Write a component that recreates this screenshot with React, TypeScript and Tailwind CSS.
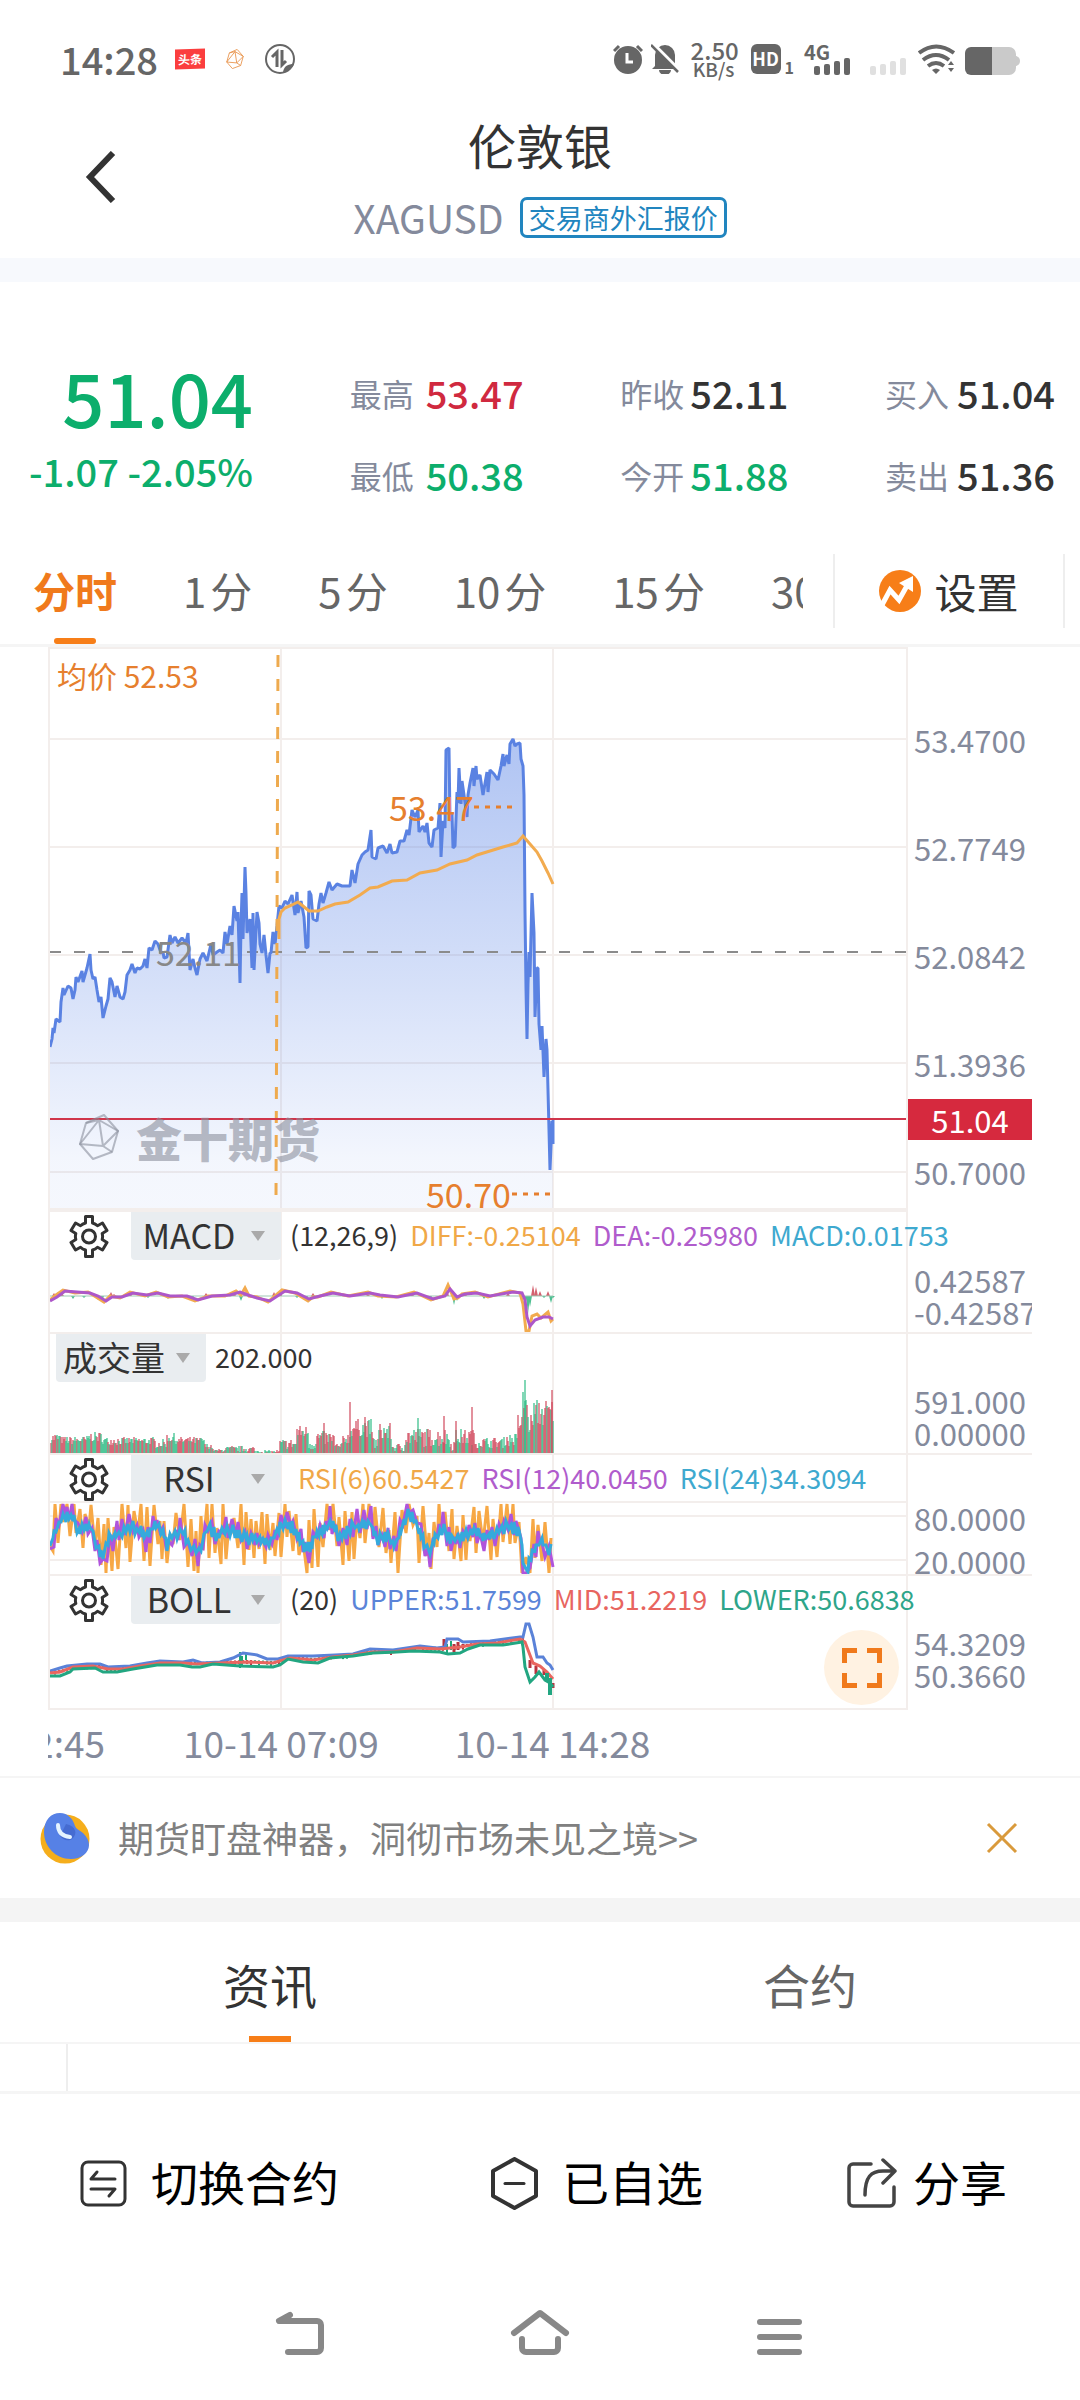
import type { ReactNode } from "react";

type Point = [number, number];

const stats = [
  {
    width: "w-[174px]",
    rows: [
      { label: "最高", value: "53.47", color: "text-[#d0293f]" },
      { label: "最低", value: "50.38", color: "text-[#0cae6c]" },
    ],
  },
  {
    width: "w-[168px]",
    rows: [
      { label: "昨收", value: "52.11", color: "text-[#333333]" },
      { label: "今开", value: "51.88", color: "text-[#0cae6c]" },
    ],
  },
  {
    width: "w-[170px]",
    rows: [
      { label: "买入", value: "51.04", color: "text-[#333333]" },
      { label: "卖出", value: "51.36", color: "text-[#333333]" },
    ],
  },
];

const minutePeriods = [1, 5, 10, 15, 30];

const price: Point[] = [
  [0, 398], [2, 390], [3, 379], [4, 384], [6, 370], [10, 373], [11, 353], [13, 339], [14, 346], [18, 337],
  [21, 339], [23, 350], [25, 341], [26, 328], [28, 333], [32, 322], [33, 333], [37, 319], [40, 305], [41, 321],
  [43, 330], [45, 328], [47, 341], [49, 353], [51, 348], [53, 369], [56, 357], [58, 350], [60, 329], [62, 333],
  [65, 348], [67, 337], [70, 348], [73, 350], [75, 343], [77, 326], [80, 321], [82, 315], [85, 324], [87, 319],
  [90, 320], [93, 317], [95, 310], [97, 319], [99, 299], [102, 301], [105, 292], [108, 295], [111, 304], [113, 303],
  [114, 309], [117, 308], [120, 286], [122, 294], [125, 288], [128, 294], [132, 289], [136, 294], [138, 284], [140, 321],
  [143, 310], [145, 319], [147, 326], [150, 310], [153, 304], [157, 312], [161, 295], [163, 306], [167, 303], [170, 301],
  [173, 304], [175, 283], [177, 295], [180, 277], [182, 286], [184, 257], [187, 272], [188, 263], [190, 334], [191, 277],
  [192, 244], [193, 290], [195, 218], [196, 244], [197, 284], [200, 270], [202, 319], [203, 264], [204, 321], [207, 263],
  [209, 274], [210, 295], [212, 304], [214, 286], [216, 306], [218, 324], [220, 304], [221, 304], [223, 283], [225, 295],
  [227, 277], [229, 257], [232, 259], [235, 252], [238, 255], [242, 246], [245, 266], [247, 243], [248, 264], [251, 252],
  [254, 268], [256, 299], [258, 298], [259, 242], [261, 246], [263, 270], [267, 272], [269, 255], [271, 244], [273, 254],
  [276, 244], [279, 233], [282, 241], [287, 235], [292, 237], [297, 237], [300, 237], [302, 221], [305, 234], [308, 215],
  [312, 206], [315, 203], [318, 201], [321, 181], [322, 208], [326, 210], [328, 199], [333, 197], [337, 204], [340, 195],
  [342, 204], [347, 203], [350, 192], [354, 192], [357, 181], [359, 186], [362, 161], [365, 168], [368, 161], [369, 183],
  [373, 177], [375, 183], [377, 174], [379, 194], [382, 198], [384, 181], [388, 179], [390, 154], [391, 208], [393, 172],
  [395, 179], [396, 101], [399, 99], [400, 172], [402, 164], [403, 199], [405, 197], [407, 143], [408, 154], [409, 119],
  [411, 155], [412, 132], [414, 146], [417, 168], [418, 146], [420, 134], [423, 119], [424, 137], [426, 117], [427, 130],
  [430, 126], [433, 146], [437, 123], [438, 143], [440, 121], [444, 125], [448, 131], [451, 117], [453, 105], [454, 117],
  [457, 106], [459, 115], [460, 95], [463, 90], [465, 97], [467, 95], [470, 94], [471, 110], [473, 117], [474, 146],
  [475, 263], [476, 339], [477, 390], [478, 335], [479, 303], [480, 328], [482, 244], [484, 284], [485, 368], [487, 319],
  [488, 319], [489, 375], [491, 401], [492, 377], [494, 428], [496, 390], [497, 401], [499, 481], [500, 521], [502, 472],
  [503, 495], [503, 470],
];

const average: Point[] = [
  [229, 290], [229, 270], [231, 263], [235, 259], [242, 256], [248, 253], [253, 257], [259, 262], [268, 262], [277, 258],
  [285, 255], [298, 253], [310, 246], [320, 239], [328, 238], [342, 232], [357, 231], [370, 224], [387, 221], [400, 215],
  [417, 211], [427, 206], [440, 202], [453, 198], [467, 194], [473, 187], [480, 195], [487, 203], [492, 212], [498, 224],
  [503, 235],
];

const dea: Point[] = [
  [0, 89], [7, 85], [15, 79], [27, 80], [40, 81], [48, 84], [56, 89], [62, 85], [72, 85], [83, 81], [97, 83], [108, 81],
  [120, 84], [137, 84], [148, 88], [162, 84], [180, 83], [190, 80], [198, 83], [207, 86], [220, 89], [235, 79], [247, 81],
  [259, 87], [270, 84], [283, 81], [300, 84], [320, 81], [330, 83], [348, 85], [367, 81], [383, 87], [395, 84], [400, 77],
  [407, 85], [415, 82], [427, 81], [440, 84], [463, 80], [472, 81], [475, 88], [477, 105], [480, 114], [485, 108],
  [493, 105], [499, 105], [503, 107],
];

const diff: Point[] = [
  [0, 88], [6, 83], [13, 78], [25, 81], [38, 80], [46, 85], [54, 90], [60, 84], [70, 86], [80, 80], [95, 84], [106, 80],
  [118, 85], [132, 84], [145, 89], [158, 84], [175, 84], [186, 79], [191, 83], [195, 76], [199, 84], [207, 85], [218, 90],
  [232, 78], [245, 81], [258, 89], [263, 85], [268, 85], [281, 80], [298, 84], [318, 80], [328, 84], [346, 85], [364, 80],
  [381, 88], [393, 84], [398, 73], [404, 87], [408, 86], [412, 82], [425, 80], [438, 85], [460, 79], [470, 81], [473, 92],
  [476, 119], [479, 119], [482, 104], [487, 102], [491, 106], [498, 100], [501, 109], [503, 107],
];

const macdBars: Point[] = [
  [4, 3], [8, 4], [12, 3], [23, -3], [34, -2], [48, -4], [52, -5], [61, 4], [64, 2], [80, 3], [98, -2], [118, -3],
  [142, -4], [156, 3], [184, 4], [191, -5], [195, 5], [206, -3], [224, 4], [230, 5], [247, -2], [256, -4], [263, 3],
  [276, 2], [318, 2], [332, -3], [362, 3], [380, -4], [397, 7], [404, -9], [407, -5], [415, 3], [434, -3], [458, 3],
  [476, -5], [478, -18], [480, -11], [483, 11], [486, 9], [490, 5], [494, -2], [498, 5], [501, -7], [503, -2],
];

const rsiBase: Point[] = [
  [0, 92], [5, 75], [13, 60], [22, 62], [30, 77], [40, 70], [45, 87], [53, 103], [60, 82], [73, 78], [83, 72], [90, 77],
  [97, 83], [105, 68], [112, 75], [117, 90], [123, 80], [133, 78], [140, 93], [150, 95], [157, 72], [167, 80], [177, 73],
  [190, 80], [207, 85], [220, 87], [233, 70], [243, 72], [257, 95], [267, 80], [280, 68], [290, 82], [303, 73], [320, 67],
  [327, 85], [337, 82], [345, 90], [357, 60], [367, 68], [378, 97], [387, 80], [393, 72], [402, 85], [423, 78], [440, 83],
  [457, 70], [470, 75], [473, 102], [476, 117], [482, 97], [490, 85], [497, 93], [503, 95],
];

const bollUpper: Point[] = [
  [0, 95], [10, 92], [17, 90], [37, 88], [50, 88], [58, 91], [80, 90], [97, 87], [110, 85], [133, 86], [143, 84],
  [152, 87], [170, 86], [183, 82], [193, 77], [207, 79], [217, 83], [228, 83], [238, 80], [263, 80], [285, 79],
  [303, 78], [320, 73], [343, 74], [370, 70], [387, 72], [395, 71], [397, 63], [408, 63], [413, 66], [440, 65],
  [470, 61], [473, 61], [476, 48], [479, 48], [483, 61], [487, 81], [493, 81], [497, 87], [500, 89], [503, 94],
];

const bollMid: Point[] = [
  [0, 97], [10, 96], [23, 91], [43, 90], [58, 93], [73, 93], [90, 90], [110, 87], [133, 87], [147, 88], [170, 87],
  [197, 86], [223, 87], [240, 82], [263, 84], [283, 81], [303, 79], [323, 76], [343, 76], [367, 72], [390, 73],
  [410, 71], [427, 68], [447, 67], [470, 63], [475, 66], [483, 87], [490, 90], [497, 96], [503, 103],
];

const bollLower: Point[] = [
  [0, 100], [10, 100], [20, 96], [23, 93], [45, 92], [53, 96], [67, 96], [83, 93], [107, 89], [130, 89], [142, 91],
  [150, 91], [163, 88], [190, 90], [223, 91], [230, 89], [238, 83], [253, 86], [268, 87], [280, 82], [303, 80],
  [323, 77], [347, 76], [363, 75], [390, 76], [398, 78], [410, 77], [418, 73], [430, 69], [453, 69], [472, 66],
  [473, 71], [475, 91], [480, 106], [485, 101], [489, 96], [495, 104], [500, 107], [503, 111],
];

// [from x, to x, lowest bar, tallest bar]
const volumeBands = [
  [0, 10, 10, 20], [10, 38, 9, 17], [38, 52, 11, 21], [52, 104, 8, 16], [104, 116, 5, 14], [116, 124, 10, 20],
  [124, 154, 9, 16], [154, 162, 4, 10], [162, 172, 1, 4], [172, 204, 1, 7], [204, 229, 0, 3], [229, 246, 4, 14],
  [246, 258, 14, 28], [258, 266, 3, 16], [266, 284, 8, 22], [284, 292, 2, 10], [292, 300, 9, 20], [300, 322, 16, 34],
  [322, 328, 3, 17], [328, 341, 12, 30], [341, 354, 1, 10], [354, 376, 6, 26], [376, 400, 6, 25], [400, 405, 2, 14],
  [405, 424, 8, 24], [424, 454, 5, 16], [454, 467, 7, 20], [467, 472, 20, 40], [472, 477, 38, 64], [477, 482, 18, 40],
  [482, 503, 26, 54],
];

const volumeSpikes: Point[] = [
  [273, 30], [299, 51], [314, 36], [367, 35], [393, 37], [405, 32], [421, 46], [474, 73], [501, 63],
];

function toPath(points: Point[]) {
  return points.map(([x, y], i) => `${i ? "L" : "M"}${x} ${y}`).join("");
}

function createRandom(seed: number) {
  let value = seed;
  return () => {
    value = (value * 16807) % 2147483647;
    return value / 2147483647;
  };
}

function valueAt(points: Point[], x: number) {
  const i = points.findIndex((p) => p[0] >= x);
  if (i <= 0) return points[i === 0 ? 0 : points.length - 1][1];
  const [x0, y0] = points[i - 1];
  const [x1, y1] = points[i];
  return y0 + ((y1 - y0) * (x - x0)) / (x1 - x0 || 1);
}

function oscillator(seed: number, step: number, swing: number, gain: number): Point[] {
  const random = createRandom(seed);
  const out: Point[] = [];
  let side = 1;
  for (let x = 0; x <= 503; x += step + Math.floor(random() * 3)) {
    side = -side;
    const base = 80 + (valueAt(rsiBase, x) - 80) * gain;
    const y = base + side * swing * (0.1 + random() * 0.9);
    out.push([x, Math.max(49, Math.min(118, Math.round(y)))]);
  }
  return out;
}

const rsi6 = oscillator(11, 2, 36, 1.2);
const rsi12 = oscillator(29, 2, 15, 1.3);
const rsi24 = oscillator(53, 1, 7, 1);

const volume = (() => {
  const random = createRandom(7);
  const bars: { x: number; height: number; up: boolean }[] = [];
  for (const [from, to, low, high] of volumeBands) {
    for (let x = from; x < to; x += 1) {
      bars.push({ x, height: Math.round(low + (high - low) * random()), up: random() > 0.5 });
    }
  }
  for (const [x, height] of volumeSpikes) bars.push({ x, height, up: x !== 474 && x !== 367 });
  return bars;
})();

const bollCandles = (() => {
  const random = createRandom(91);
  const bars: { x: number; y: number; height: number; up: boolean }[] = [];
  for (let x = 0; x < 473; x += 4) {
    bars.push({ x, y: valueAt(bollMid, x) - 2, height: 2 + Math.round(random() * 3), up: random() > 0.5 });
  }
  return bars;
})();

/* ---------- status bar ---------- */

function PolyhedronIcon({ className }: { className: string }) {
  return (
    <svg viewBox="0 0 40 46" fill="none" stroke="currentColor" strokeWidth="2" strokeLinejoin="round" className={className}>
      <path d="M7 9 25 1l14 16-6 21-19 7L1 30Z" />
      <path d="M20 6 1 30l23 2L39 17 20 6l4 26 9 6M7 9l13-3" />
    </svg>
  );
}

function StatusBar() {
  return (
    <div className="flex h-[118px] items-center justify-between pl-[60px] pr-[60px] text-[#666666]">
      <div className="flex items-center">
        <span className="text-[38px] font-medium leading-[40px]">14:28</span>
        <span className="ml-[17px] h-5 w-[30px] -skew-y-2 bg-[#fb3e3e] text-center text-[12px] font-bold leading-[19px] text-white">头条</span>
        <PolyhedronIcon className="ml-[21px] h-5 w-[18px] text-[#e8934a]" />
        <svg viewBox="0 0 30 30" className="ml-[21px] size-[30px]" fill="none">
          <circle cx="15" cy="15" r="14" stroke="currentColor" strokeWidth="2" />
          <path d="M12 23V8l-5 5M17 6v15l4-4" stroke="currentColor" strokeWidth="3" />
          <path d="M18 28c1-6 5-8 11-8-2 4-6 8-11 8Z" fill="currentColor" />
        </svg>
      </div>
      <div className="flex items-center">
        <svg viewBox="0 0 30 30" className="size-[30px]" fill="none" stroke="currentColor">
          <circle cx="15" cy="16" r="14" fill="currentColor" stroke="none" />
          <path d="m1 7 5-5M29 7l-5-5" strokeWidth="3" />
          <path d="M14 9v9h6" stroke="#fff" strokeWidth="3" />
        </svg>
        <svg viewBox="0 0 28 30" className="ml-2 h-[30px] w-7" fill="none">
          <path d="M4 22V11a10 10 0 0 1 20 0v11l3 3H1ZM8 26h12a6 5 0 0 1-12 0Z" fill="currentColor" />
          <path d="m1-1 27 27" stroke="#fff" strokeWidth="4" />
          <path d="m0 1 27 27" stroke="currentColor" strokeWidth="2.5" />
        </svg>
        <div className="ml-3 w-[46px] text-center font-medium">
          <div className="text-[24px] leading-5">2.50</div>
          <div className="text-[19px] leading-[18px]">KB/s</div>
        </div>
        <div className="ml-[14px] h-[30px] w-[30px] rounded-[6px] bg-[#666666] text-center text-[18px] font-bold leading-[29px] text-white">HD</div>
        <span className="ml-1 mt-4 text-[16px] font-bold leading-4">1</span>
        <div className="relative ml-[10px] h-[31px] w-[46px]">
          <span className="absolute left-0 top-0 text-[20px] font-bold leading-4">4G</span>
          <svg viewBox="0 0 36 17" className="absolute bottom-0 right-0 h-[17px] w-9" fill="currentColor">
            <rect x="0" y="8" width="6" height="9" rx="2" />
            <rect x="10" y="6" width="6" height="11" rx="2" />
            <rect x="20" y="3" width="6" height="14" rx="2" />
            <rect x="30" y="0" width="6" height="17" rx="2" />
          </svg>
        </div>
        <svg viewBox="0 0 36 17" className="ml-[20px] mt-[14px] h-[17px] w-9 text-[#e0e0e0]" fill="currentColor">
          <rect x="0" y="8" width="6" height="9" rx="2" />
          <rect x="10" y="6" width="6" height="11" rx="2" />
          <rect x="20" y="3" width="6" height="14" rx="2" />
          <rect x="30" y="0" width="6" height="17" rx="2" />
        </svg>
        <svg viewBox="0 0 37 30" className="ml-3 h-[30px] w-[37px]" fill="none" stroke="currentColor" strokeWidth="4">
          <path d="M1 9Q18-4 36 9M5 16q13-10 26 0M10 22q8-6 16 0" />
          <path d="m14 26 4 4 4-4q-4-3-8 0ZM30 21l3-4 3 4ZM30 24l3 4 3-4Z" fill="currentColor" stroke="none" />
        </svg>
        <svg viewBox="0 0 55 28" className="ml-[10px] mt-1 h-7 w-[55px]">
          <path d="M7 0h37a7 7 0 0 1 7 7v2q4 1 4 5t-4 5v2a7 7 0 0 1-7 7H7Z" fill="#cacaca" />
          <path d="M27 0H6a6 6 0 0 0-6 6v16a6 6 0 0 0 6 6h21Z" fill="#666" />
        </svg>
      </div>
    </div>
  );
}

function Header() {
  return (
    <header className="grid grid-cols-[200px_1fr_200px] pb-5">
      <button aria-label="返回" className="ml-[85px] mt-[33px] h-[52px] w-8 text-[#333333]">
        <svg viewBox="0 0 32 52" fill="none" stroke="currentColor" strokeWidth="6">
          <path d="M28 2 5 26l23 24" />
        </svg>
      </button>
      <div className="flex flex-col items-center">
        <h1 className="text-[48px] leading-[52px] text-[#333333]">伦敦银</h1>
        <div className="mt-[27px] flex items-center gap-4">
          <span className="text-[39px] leading-[41px] text-[#848a9c]">XAGUSD</span>
          <span className="rounded-[7px] border-[3px] border-[#2185bf] px-[6px] text-[27px] leading-[35px] text-[#2185bf]">交易商外汇报价</span>
        </div>
      </div>
    </header>
  );
}

function Quote() {
  return (
    <section className="flex items-start justify-between pb-[38px] pl-7 pr-[25px] pt-[74px]">
      <div className="w-[225px] whitespace-nowrap text-right font-medium text-[#0cae6c]">
        <div className="text-[74px] leading-[80px]">51.04</div>
        <div className="mt-[10px] text-[38px] leading-[50px]">-1.07 -2.05%</div>
      </div>
      {stats.map((column) => (
        <dl key={column.width} className={`mt-3 flex flex-col gap-8 ${column.width}`}>
          {column.rows.map((row) => (
            <div key={row.label} className="flex items-center justify-between leading-[50px]">
              <dt className="text-[32px] text-[#848a9c]">{row.label}</dt>
              <dd className={`text-[38px] font-medium ${row.color}`}>{row.value}</dd>
            </div>
          ))}
        </dl>
      ))}
    </section>
  );
}

function PeriodTabs() {
  return (
    <nav className="flex h-[109px] items-center border-b-[3px] border-[#f5f5f5] text-[42px]">
      <div className="mr-[30px] flex h-full min-w-0 flex-1 gap-[66px] overflow-hidden pl-[33px]">
        <button className="relative flex h-full shrink-0 items-center pb-1 font-bold text-[#f07a1c]">
          分时
          <span className="absolute bottom-0 left-1/2 h-[6px] w-[42px] -translate-x-1/2 rounded-[3px] bg-[#f77e18]" />
        </button>
        {minutePeriods.map((minutes) => (
          <button key={minutes} className="flex h-full shrink-0 items-center gap-1 pb-1 text-[#666666]">
            <span>{minutes}</span>
            <span>分</span>
          </button>
        ))}
      </div>
      <button className="mr-[15px] flex h-[74px] w-[232px] items-center justify-center gap-[13px] border-x-2 border-[#eeeeee] text-[#333333]">
        <svg viewBox="0 0 42 42" className="size-[42px]">
          <circle cx="21" cy="21" r="21" fill="#f77e18" />
          <path d="m3 35 8-15 9 10 9-16" fill="none" stroke="#fff" strokeWidth="5" />
          <path d="m20 13 14-7v16Z" fill="#fff" />
        </svg>
        <span className="leading-[60px]">设置</span>
      </button>
    </nav>
  );
}

/* ---------- charts ---------- */

function Panel({ children, axis, extended = true }: { children: ReactNode; axis: ReactNode; extended?: boolean }) {
  return (
    <div className="relative grid grid-cols-[minmax(0,1fr)_124px]">
      <div className="relative border-x-2 border-b-2 border-[#f3eeec]">{children}</div>
      <div className={`overflow-hidden pl-[6px] text-[31px] text-[#848a9c] ${extended ? "border-b-2 border-[#f3eeec]" : ""}`}>{axis}</div>
    </div>
  );
}

function Plot({ height, children }: { height: number; children: ReactNode }) {
  return (
    <svg viewBox={`0 0 856 ${height}`} preserveAspectRatio="none" className="absolute inset-0 h-full w-full" fill="none">
      <path d={`M231 0V${height}M503 0V${height}`} stroke="#f3eeec" strokeWidth="2" />
      {children}
    </svg>
  );
}

function GearIcon() {
  return (
    <svg viewBox="0 0 40 43" className="h-[43px] w-10 text-[#333333]" fill="none" stroke="currentColor" strokeWidth="3" strokeLinejoin="round">
      <path d="M16.5 1.5h7V8q3 .8 5 2.8l5-2.8 4.5 7.5-4.8 3q.8 3 0 6l4.8 3-4.5 7.5-5-2.8q-2 2-5 2.8v6.5h-7V35q-3-.8-5-2.8l-5 2.8L2 27.5l4.8-3q-.8-3 0-6L2 15.5 6.5 8l5 2.8q2-2 5-2.8Z" />
      <circle cx="20" cy="21.5" r="6.5" />
    </svg>
  );
}

function IndicatorBar({ name, gear = true, children }: { name: string; gear?: boolean; children: ReactNode }) {
  return (
    <div className="relative z-10 flex h-12 w-max items-center whitespace-nowrap text-[27px] text-[#333333]">
      {gear && (
        <button aria-label={`${name} 参数设置`} className="ml-[19px] mr-[22px]">
          <GearIcon />
        </button>
      )}
      <div className={`relative h-12 w-[150px] ${gear ? "" : "ml-[6px]"}`}>
        <select
          aria-label="指标"
          defaultValue={name}
          className="h-full w-full appearance-none rounded-b-[4px] bg-[#e9edf0] pb-[2px] pr-[34px] text-center text-[34px] leading-[46px]"
        >
          <option>{name}</option>
        </select>
        <svg viewBox="0 0 14 10" className="pointer-events-none absolute right-4 top-[19px] h-[10px] w-[14px]">
          <path d="M0 0h14L7 10Z" fill="#aaaaaa" />
        </svg>
      </div>
      <div className="ml-[9px] flex gap-3 pb-[2px]">{children}</div>
    </div>
  );
}

function PriceChart() {
  return (
    <div className="relative grid grid-cols-[minmax(0,1fr)_124px]">
      <div className="relative h-[565px] border-x-2 border-b-4 border-t-2 border-[#f3eeec]">
        <Plot height={559}>
          <defs>
            <linearGradient id="priceFill" x1="0" y1="90" x2="0" y2="559" gradientUnits="userSpaceOnUse">
              <stop offset="0" stopColor="#5a84e6" stopOpacity="0.48" />
              <stop offset="0.5" stopColor="#5a84e6" stopOpacity="0.26" />
              <stop offset="0.9" stopColor="#5a84e6" stopOpacity="0.07" />
              <stop offset="1" stopColor="#5a84e6" stopOpacity="0.06" />
            </linearGradient>
          </defs>
          <path d="M0 90H856M0 198H856M0 306H856M0 414H856M0 523H856" stroke="#f3eeec" strokeWidth="2" />
          <path d={`${toPath(price)}V559H0Z`} fill="url(#priceFill)" />
          <path d="M0 303H86M197 303H856" stroke="#8b8b8b" strokeWidth="2" strokeDasharray="11 13" />
          <path d={toPath(price)} stroke="#5a82e2" strokeWidth="3" strokeLinejoin="bevel" />
          <path d="M228 6 226 548" stroke="#eeaa4e" strokeWidth="3" strokeDasharray="12 12" />
          <path d={toPath(average)} stroke="#f2ab4f" strokeWidth="3" />
          <path d="M424 158H463M462 545H502" stroke="#e67f2e" strokeWidth="3" strokeDasharray="5 6" />
          <path d="M0 470H856" stroke="#d0354b" strokeWidth="2" />
        </Plot>
        <div className="absolute left-[7px] top-[6px] text-[30px] leading-[40px] text-[#e67f2e]">均价 52.53</div>
        <div className="absolute left-[339px] top-[138px] text-[34px] leading-[40px] text-[#e67f2e]">53.47</div>
        <div className="absolute left-[106px] top-[283px] text-[34px] leading-[40px] text-[#888888]">52.11</div>
        <div className="absolute left-[376px] top-[525px] text-[34px] leading-[40px] text-[#e67f2e]">50.70</div>
        <div className="absolute left-[28px] top-[464px] flex items-center gap-4 text-[#8b8f9c]/60">
          <PolyhedronIcon className="h-[46px] w-[42px]" />
          <span className="text-[46px] font-black leading-[48px]">金十期货</span>
        </div>
      </div>
      <div className="relative flex flex-col gap-[68px] pl-[6px] pt-[73px] text-[31px] leading-[40px] text-[#848a9c]">
        <span>53.4700</span>
        <span>52.7749</span>
        <span>52.0842</span>
        <span>51.3936</span>
        <span>50.7000</span>
        <div className="absolute left-0 top-[452px] w-full bg-[#d6293e] text-center leading-[41px] text-white">51.04</div>
      </div>
    </div>
  );
}

function MacdChart() {
  return (
    <Panel
      axis={
        <div className="flex h-full flex-col justify-end pb-1 leading-8">
          <span>0.42587</span>
          <span>-0.42587</span>
        </div>
      }
    >
      <Plot height={120}>
        {macdBars.map(([x, h]) => (
          <path key={x} d={`M${x - 2} 84 ${x} ${84 - h} ${x + 2} 84Z`} fill={h > 0 ? "#d4616f" : "#4fbf92"} />
        ))}
        <path d="M0 84H503" stroke="#9fc9b4" strokeWidth="1" />
        <path d={toPath(diff)} stroke="#f2ab4f" strokeWidth="3" />
        <path d={toPath(dea)} stroke="#ad57c9" strokeWidth="3" />
      </Plot>
      <div className="h-[120px]">
        <IndicatorBar name="MACD">
          <span>(12,26,9)</span>
          <span className="text-[#f0a848]">DIFF:-0.25104</span>
          <span className="text-[#b05ccc]">DEA:-0.25980</span>
          <span className="text-[#3ea9cf]">MACD:0.01753</span>
        </IndicatorBar>
      </div>
    </Panel>
  );
}

function VolumeChart() {
  return (
    <Panel
      axis={
        <div className="flex h-full flex-col justify-end pb-1 leading-8">
          <span>591.000</span>
          <span>0.00000</span>
        </div>
      }
    >
      <Plot height={119}>
        {volume.map((bar, i) => (
          <rect key={i} x={bar.x} y={119 - bar.height} width="2" height={bar.height} fill={bar.up ? "#d0485c" : "#2ebd85"} fillOpacity="0.6" />
        ))}
      </Plot>
      <div className="h-[119px]">
        <IndicatorBar name="成交量" gear={false}>
          <span>202.000</span>
        </IndicatorBar>
      </div>
    </Panel>
  );
}

function RsiChart() {
  return (
    <Panel
      axis={
        <div className="flex h-full flex-col justify-end leading-[43px]">
          <span>80.0000</span>
          <span className="-mb-2">20.0000</span>
        </div>
      }
    >
      <Plot height={119}>
        <path d="M0 47H856M0 61H856M0 105H856" stroke="#f3eeec" strokeWidth="2" />
        <path d={toPath(rsi6)} stroke="#f7a845" strokeWidth="3" />
        <path d={toPath(rsi12)} stroke="#b054dc" strokeWidth="3" />
        <path d={toPath(rsi24)} stroke="#35aadc" strokeWidth="3" />
      </Plot>
      <div className="h-[119px]">
        <IndicatorBar name="RSI">
          <span className="ml-2 text-[#f0a848]">RSI(6)60.5427</span>
          <span className="text-[#b05ccc]">RSI(12)40.0450</span>
          <span className="text-[#3ea9cf]">RSI(24)34.3094</span>
        </IndicatorBar>
      </div>
    </Panel>
  );
}

function BollChart() {
  return (
    <Panel
      extended={false}
      axis={
        <div className="flex h-full flex-col justify-end pb-[19px] leading-8">
          <span>54.3209</span>
          <span>50.3660</span>
        </div>
      }
    >
      <Plot height={132}>
        {bollCandles.map((bar) => (
          <rect key={bar.x} x={bar.x} y={bar.y} width="2" height={bar.height} fill={bar.up ? "#b8323f" : "#1d9d6c"} />
        ))}
        <path d="M190 76V92M192 80V90M196 78V84M397 68V78M401 65V74" stroke="#1fa57a" strokeWidth="2" />
        <path d="M394 63V70M404 68V76M408 66V74M413 68V72M480 84V92M486 90V98M494 94V99M503 107V112" stroke="#b8323f" strokeWidth="3" />
        <path d={toPath(bollUpper)} stroke="#5a82d8" strokeWidth="3" />
        <path d={toPath(bollMid)} stroke="#e9665f" strokeWidth="3" />
        <path d={toPath(bollLower)} stroke="#22a681" strokeWidth="3" />
        <path d="M497 97V106M500 102V119" stroke="#22a681" strokeWidth="4" />
      </Plot>
      <div className="h-[132px]">
        <IndicatorBar name="BOLL">
          <span>(20)</span>
          <span className="text-[#5b84d8]">UPPER:51.7599</span>
          <span className="text-[#e8655f]">MID:51.2219</span>
          <span className="text-[#2ea58a]">LOWER:50.6838</span>
        </IndicatorBar>
      </div>
      <button aria-label="全屏" className="absolute bottom-[3px] right-[7px] grid size-[75px] place-items-center rounded-full bg-[#fff2e2]">
        <svg viewBox="0 0 40 40" className="size-10" fill="none" stroke="#f07a1c" strokeWidth="5">
          <path d="M15 2.5H2.5V15M25 2.5h12.5V15M15 37.5H2.5V25M25 37.5h12.5V25" />
        </svg>
      </button>
    </Panel>
  );
}

function Charts() {
  return (
    <section className="px-12">
      <PriceChart />
      <MacdChart />
      <VolumeChart />
      <RsiChart />
      <BollChart />
      <div className="flex h-[66px] items-center overflow-hidden whitespace-nowrap pb-[2px] text-[37px] leading-[60px] text-[#848a9c]">
        <span className="flex w-[57px] justify-end overflow-hidden">22:45</span>
        <span className="ml-[78px]">10-14 07:09</span>
        <span className="ml-[76px]">10-14 14:28</span>
      </div>
    </section>
  );
}

/* ---------- lower part ---------- */

function Promo() {
  return (
    <div className="flex h-[122px] items-center border-t-2 border-[#f5f5f5] pl-[38px] pr-[62px]">
      <svg viewBox="0 0 52 52" className="size-[52px]">
        <circle cx="27" cy="27" r="24.5" fill="#f5ae1c" />
        <path d="M22 1c8 0 13 6 15 13 1 3 4 4 8 7 4 4 6 8 6 12 0 8-8 14-18 14C17 47 6 34 6 20 6 8 13 1 22 1Z" fill="#5681e6" />
        <path d="M28 12c10 2 12 10 6 15-4 3-10 0-12-3Z" fill="#3f62c8" fillOpacity="0.7" />
        <path d="M20 13c0 7 4 11 12 12" fill="none" stroke="#e4f3ff" strokeWidth="4" strokeLinecap="round" />
      </svg>
      <a href="#promo" className="ml-7 flex-1 pb-[2px] text-[36px] leading-[48px] text-[#808080]">期货盯盘神器，洞彻市场未见之境&gt;&gt;</a>
      <button aria-label="关闭" className="text-[#d99a3c]">
        <svg viewBox="0 0 32 32" className="size-8" fill="none" stroke="currentColor" strokeWidth="3">
          <path d="m2 2 28 28M30 2 2 30" />
        </svg>
      </button>
    </div>
  );
}

function NewsTabs() {
  return (
    <section className="border-b-[3px] border-[#f5f5f5]">
      <div className="grid h-[122px] grid-cols-2 border-b-2 border-[#f5f5f5] text-[47px]">
        <button className="relative pt-1 text-[#333333]">
          资讯
          <span className="absolute bottom-0 left-1/2 h-[6px] w-[42px] -translate-x-1/2 bg-[#f77e18]" />
        </button>
        <button className="pt-1 text-[#666666]">合约</button>
      </div>
      <div className="ml-[66px] h-[47px] border-l-2 border-[#eeeeee]" />
    </section>
  );
}

function ActionBar() {
  return (
    <div className="flex items-center justify-between pb-[58px] pl-20 pr-[73px] pt-[57px] text-[47px] leading-[60px] text-black">
      <button className="flex items-center gap-6">
        <svg viewBox="0 0 47 47" className="size-[47px] text-[#333333]" fill="none" stroke="currentColor" strokeWidth="3" strokeLinecap="round" strokeLinejoin="round">
          <rect x="2" y="2" width="43" height="43" rx="6" />
          <path d="M35 19H11l6-7M11 29h24l-6 7" />
        </svg>
        <span className="pb-1">切换合约</span>
      </button>
      <button className="ml-2 flex items-center gap-6">
        <svg viewBox="0 0 47 53" className="h-[53px] w-[47px] text-[#333333]" fill="none" stroke="currentColor" strokeWidth="4" strokeLinecap="round" strokeLinejoin="round">
          <path d="M23.5 2 45 14v25L23.5 51 2 39V14Z" />
          <path d="M14 26.5h19" strokeWidth="3" />
        </svg>
        <span className="pb-1">已自选</span>
      </button>
      <button className="flex items-center gap-4">
        <svg viewBox="0 0 50 50" className="size-[50px] text-[#444444]" fill="none" stroke="currentColor" strokeWidth="3.5" strokeLinecap="round" strokeLinejoin="round">
          <path d="M24 6H6a4 4 0 0 0-4 4v34a4 4 0 0 0 4 4h37a4 4 0 0 0 4-4V29" />
          <path d="M18 37c0-18 6-24 18-24h12M36 2l12 11-12 12" />
        </svg>
        <span className="pb-1">分享</span>
      </button>
    </div>
  );
}

function SystemNav() {
  return (
    <nav className="flex justify-center gap-[180px] pb-8 pt-9 text-[#888888]">
      <button aria-label="返回">
        <svg viewBox="0 0 60 50" className="h-[50px] w-[60px]" fill="none" stroke="currentColor" strokeWidth="6" strokeLinecap="round" strokeLinejoin="round">
          <path d="m20 6-11 6h38a4 4 0 0 1 4 4v23a4 4 0 0 1-4 4H18" />
        </svg>
      </button>
      <button aria-label="主页">
        <svg viewBox="0 0 60 50" className="h-[50px] w-[60px]" fill="none" stroke="currentColor" strokeWidth="6" strokeLinecap="round" strokeLinejoin="round">
          <path d="M4 24 30 4l26 20M12 30v9a4 4 0 0 0 4 4h28a4 4 0 0 0 4-4v-9" />
        </svg>
      </button>
      <button aria-label="最近任务">
        <svg viewBox="0 0 60 50" className="h-[50px] w-[60px]" fill="none" stroke="currentColor" strokeWidth="6" strokeLinecap="round">
          <path d="M10 13h39M10 28h39M10 43h39" />
        </svg>
      </button>
    </nav>
  );
}

export default function App() {
  return (
    <main className="min-h-screen overflow-hidden bg-white font-['Noto_Sans_CJK_SC',sans-serif]">
      <StatusBar />
      <Header />
      <div className="h-6 bg-[#f7f9fd]" />
      <Quote />
      <PeriodTabs />
      <Charts />
      <Promo />
      <div className="h-6 bg-[#f4f4f4]" />
      <NewsTabs />
      <ActionBar />
      <SystemNav />
    </main>
  );
}
